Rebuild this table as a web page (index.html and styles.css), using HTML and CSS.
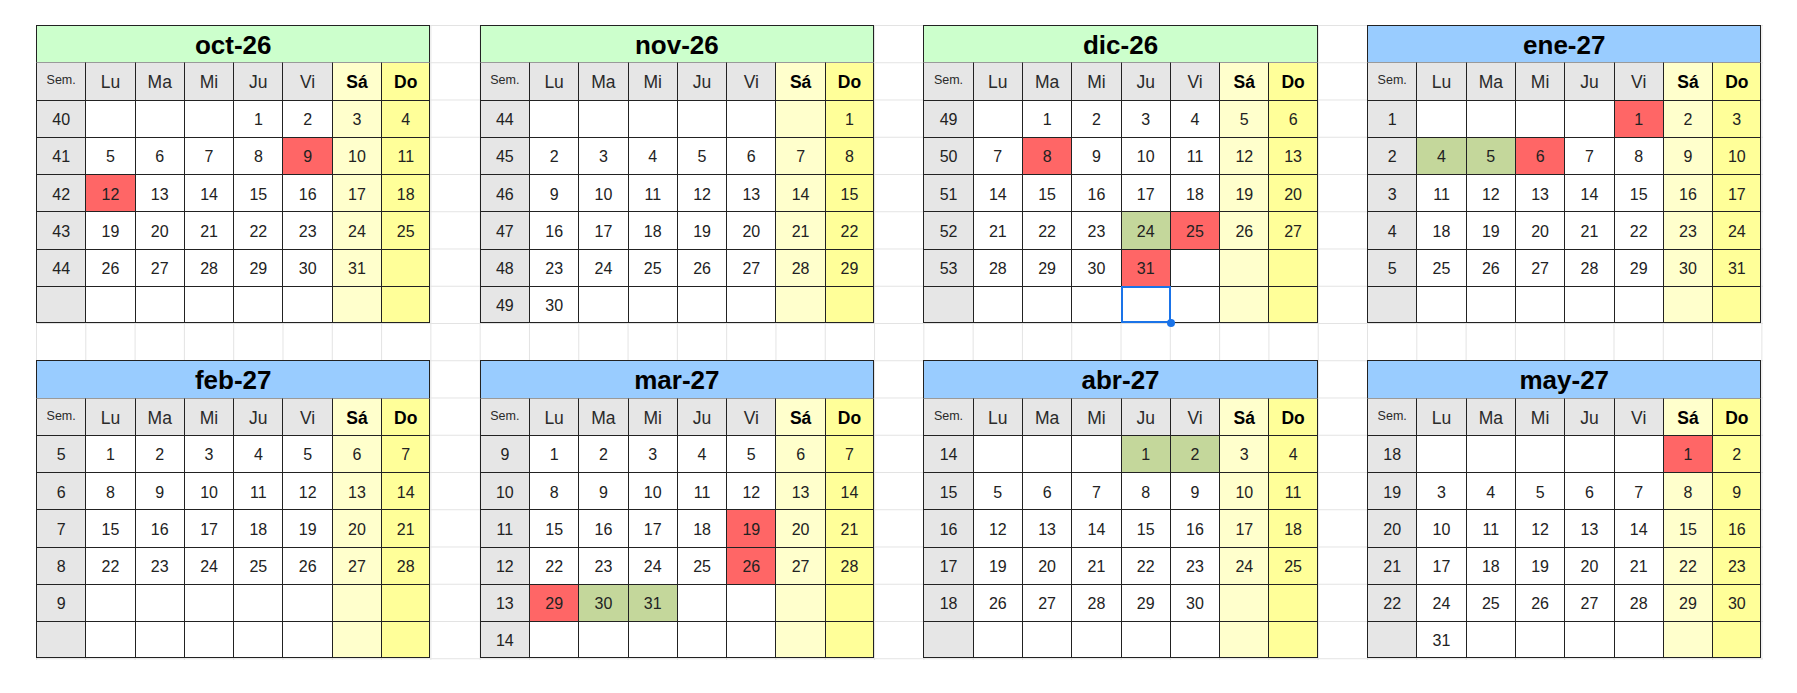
FILE: index.html
```html
<!DOCTYPE html>
<html lang="es">
<head>
<meta charset="utf-8">
<title>Calendario</title>
<link rel="stylesheet" href="styles.css">
</head>
<body>
<div class="sheet">

<div class="cal">
<span class="t">oct-26</span>
<span>Sem.</span><span>Lu</span><span>Ma</span><span>Mi</span><span>Ju</span><span>Vi</span><span>Sá</span><span>Do</span>
<span>40</span><span></span><span></span><span></span><span>1</span><span>2</span><span>3</span><span>4</span>
<span>41</span><span>5</span><span>6</span><span>7</span><span>8</span><span class="r">9</span><span>10</span><span>11</span>
<span>42</span><span class="r">12</span><span>13</span><span>14</span><span>15</span><span>16</span><span>17</span><span>18</span>
<span>43</span><span>19</span><span>20</span><span>21</span><span>22</span><span>23</span><span>24</span><span>25</span>
<span>44</span><span>26</span><span>27</span><span>28</span><span>29</span><span>30</span><span>31</span><span></span>
<span></span><span></span><span></span><span></span><span></span><span></span><span></span><span></span>
</div>

<div class="cal">
<span class="t">nov-26</span>
<span>Sem.</span><span>Lu</span><span>Ma</span><span>Mi</span><span>Ju</span><span>Vi</span><span>Sá</span><span>Do</span>
<span>44</span><span></span><span></span><span></span><span></span><span></span><span></span><span>1</span>
<span>45</span><span>2</span><span>3</span><span>4</span><span>5</span><span>6</span><span>7</span><span>8</span>
<span>46</span><span>9</span><span>10</span><span>11</span><span>12</span><span>13</span><span>14</span><span>15</span>
<span>47</span><span>16</span><span>17</span><span>18</span><span>19</span><span>20</span><span>21</span><span>22</span>
<span>48</span><span>23</span><span>24</span><span>25</span><span>26</span><span>27</span><span>28</span><span>29</span>
<span>49</span><span>30</span><span></span><span></span><span></span><span></span><span></span><span></span>
</div>

<div class="cal">
<span class="t">dic-26</span>
<span>Sem.</span><span>Lu</span><span>Ma</span><span>Mi</span><span>Ju</span><span>Vi</span><span>Sá</span><span>Do</span>
<span>49</span><span></span><span>1</span><span>2</span><span>3</span><span>4</span><span>5</span><span>6</span>
<span>50</span><span>7</span><span class="r">8</span><span>9</span><span>10</span><span>11</span><span>12</span><span>13</span>
<span>51</span><span>14</span><span>15</span><span>16</span><span>17</span><span>18</span><span>19</span><span>20</span>
<span>52</span><span>21</span><span>22</span><span>23</span><span class="g">24</span><span class="r">25</span><span>26</span><span>27</span>
<span>53</span><span>28</span><span>29</span><span>30</span><span class="r">31</span><span></span><span></span><span></span>
<span></span><span></span><span></span><span></span><span class="sel"></span><span></span><span></span><span></span>
</div>

<div class="cal">
<span class="t b">ene-27</span>
<span>Sem.</span><span>Lu</span><span>Ma</span><span>Mi</span><span>Ju</span><span>Vi</span><span>Sá</span><span>Do</span>
<span>1</span><span></span><span></span><span></span><span></span><span class="r">1</span><span>2</span><span>3</span>
<span>2</span><span class="g">4</span><span class="g">5</span><span class="r">6</span><span>7</span><span>8</span><span>9</span><span>10</span>
<span>3</span><span>11</span><span>12</span><span>13</span><span>14</span><span>15</span><span>16</span><span>17</span>
<span>4</span><span>18</span><span>19</span><span>20</span><span>21</span><span>22</span><span>23</span><span>24</span>
<span>5</span><span>25</span><span>26</span><span>27</span><span>28</span><span>29</span><span>30</span><span>31</span>
<span></span><span></span><span></span><span></span><span></span><span></span><span></span><span></span>
</div>

<div class="cal">
<span class="t b">feb-27</span>
<span>Sem.</span><span>Lu</span><span>Ma</span><span>Mi</span><span>Ju</span><span>Vi</span><span>Sá</span><span>Do</span>
<span>5</span><span>1</span><span>2</span><span>3</span><span>4</span><span>5</span><span>6</span><span>7</span>
<span>6</span><span>8</span><span>9</span><span>10</span><span>11</span><span>12</span><span>13</span><span>14</span>
<span>7</span><span>15</span><span>16</span><span>17</span><span>18</span><span>19</span><span>20</span><span>21</span>
<span>8</span><span>22</span><span>23</span><span>24</span><span>25</span><span>26</span><span>27</span><span>28</span>
<span>9</span><span></span><span></span><span></span><span></span><span></span><span></span><span></span>
<span></span><span></span><span></span><span></span><span></span><span></span><span></span><span></span>
</div>

<div class="cal">
<span class="t b">mar-27</span>
<span>Sem.</span><span>Lu</span><span>Ma</span><span>Mi</span><span>Ju</span><span>Vi</span><span>Sá</span><span>Do</span>
<span>9</span><span>1</span><span>2</span><span>3</span><span>4</span><span>5</span><span>6</span><span>7</span>
<span>10</span><span>8</span><span>9</span><span>10</span><span>11</span><span>12</span><span>13</span><span>14</span>
<span>11</span><span>15</span><span>16</span><span>17</span><span>18</span><span class="r">19</span><span>20</span><span>21</span>
<span>12</span><span>22</span><span>23</span><span>24</span><span>25</span><span class="r">26</span><span>27</span><span>28</span>
<span>13</span><span class="r">29</span><span class="g">30</span><span class="g">31</span><span></span><span></span><span></span><span></span>
<span>14</span><span></span><span></span><span></span><span></span><span></span><span></span><span></span>
</div>

<div class="cal">
<span class="t b">abr-27</span>
<span>Sem.</span><span>Lu</span><span>Ma</span><span>Mi</span><span>Ju</span><span>Vi</span><span>Sá</span><span>Do</span>
<span>14</span><span></span><span></span><span></span><span class="g">1</span><span class="g">2</span><span>3</span><span>4</span>
<span>15</span><span>5</span><span>6</span><span>7</span><span>8</span><span>9</span><span>10</span><span>11</span>
<span>16</span><span>12</span><span>13</span><span>14</span><span>15</span><span>16</span><span>17</span><span>18</span>
<span>17</span><span>19</span><span>20</span><span>21</span><span>22</span><span>23</span><span>24</span><span>25</span>
<span>18</span><span>26</span><span>27</span><span>28</span><span>29</span><span>30</span><span></span><span></span>
<span></span><span></span><span></span><span></span><span></span><span></span><span></span><span></span>
</div>

<div class="cal">
<span class="t b">may-27</span>
<span>Sem.</span><span>Lu</span><span>Ma</span><span>Mi</span><span>Ju</span><span>Vi</span><span>Sá</span><span>Do</span>
<span>18</span><span></span><span></span><span></span><span></span><span></span><span class="r">1</span><span>2</span>
<span>19</span><span>3</span><span>4</span><span>5</span><span>6</span><span>7</span><span>8</span><span>9</span>
<span>20</span><span>10</span><span>11</span><span>12</span><span>13</span><span>14</span><span>15</span><span>16</span>
<span>21</span><span>17</span><span>18</span><span>19</span><span>20</span><span>21</span><span>22</span><span>23</span>
<span>22</span><span>24</span><span>25</span><span>26</span><span>27</span><span>28</span><span>29</span><span>30</span>
<span></span><span>31</span><span></span><span></span><span></span><span></span><span></span><span></span>
</div>

</div>
</body>
</html>
```

FILE: styles.css
```css
html, body {
  margin: 0;
  background: #fff;
}

body {
  font-family: "Liberation Sans", Arial, sans-serif;
  color: #222;
  padding-bottom: 20px;
}

.sheet {
  margin: 25px 0 0 36px;
  width: 1726.5px;
  display: grid;
  grid-template-columns: repeat(4, 394.4px);
  grid-template-rows: repeat(2, 298px);
  column-gap: 49.3px;
  row-gap: 37.25px;
  padding-bottom: 2px;
  background-image:
    linear-gradient(to right, #e3e3e3 1px, transparent 1px),
    linear-gradient(to bottom, #e3e3e3 1px, transparent 1px);
  background-size: 49.3px 37.25px;
}

.cal {
  display: grid;
  grid-template-columns: repeat(8, 49.3px);
  grid-template-rows: repeat(8, 37.25px);
}

.cal > span {
  box-sizing: border-box;
  border-left: 1px solid #222;
  border-top: 1px solid #222;
  display: flex;
  align-items: center;
  justify-content: center;
  padding-top: 3px;
  font-size: 16px;
  background: #fff;
}

/* right edge: title and sunday column */
.cal > span:nth-child(8n+9) {
  border-right: 1px solid #222;
}

/* bottom edge: last row */
.cal > span:nth-last-child(-n+8) {
  border-bottom: 1px solid #222;
}

/* header row */
.cal > span:nth-child(-n+9) {
  font-size: 17.5px;
  background: #e6e6e6;
  border-top-color: #9a9a9a;
  color: #2a2a2a;
}

.cal > span:nth-child(2) {
  font-size: 12.5px;
  padding-top: 0;
  padding-bottom: 2px;
}

/* week column */
.cal > span:nth-child(8n+2) {
  background: #e6e6e6;
}

/* saturday / sunday columns */
.cal > span:nth-child(8n+8) {
  background: #ffffcc;
}

.cal > span:nth-child(8n+9) {
  background: #ffff99;
}

.cal > span:nth-child(8),
.cal > span:nth-child(9) {
  font-weight: bold;
  color: #000;
}

/* title row */
.cal > span.t {
  grid-column: 1 / -1;
  font-size: 26px;
  font-weight: bold;
  color: #000;
  background: #ccffcc;
  border-top-color: #222;
  border-right: 1px solid #222;
  padding-top: 2px;
}

.cal > span.t.b {
  background: #99ccff;
}

/* highlighted days */
.cal > span.r {
  background: #ff6666;
}

.cal > span.g {
  background: #c4d79b;
}

/* active cell selection */
.cal > span.sel {
  position: relative;
}

.cal > span.sel::before {
  content: "";
  position: absolute;
  top: -1px;
  left: -1px;
  right: -1px;
  bottom: -1px;
  border: 2px solid #1a73e8;
  z-index: 1;
}

.cal > span.sel::after {
  content: "";
  position: absolute;
  right: -5px;
  bottom: -5px;
  width: 8px;
  height: 8px;
  border-radius: 50%;
  background: #1a73e8;
  z-index: 2;
}
```
